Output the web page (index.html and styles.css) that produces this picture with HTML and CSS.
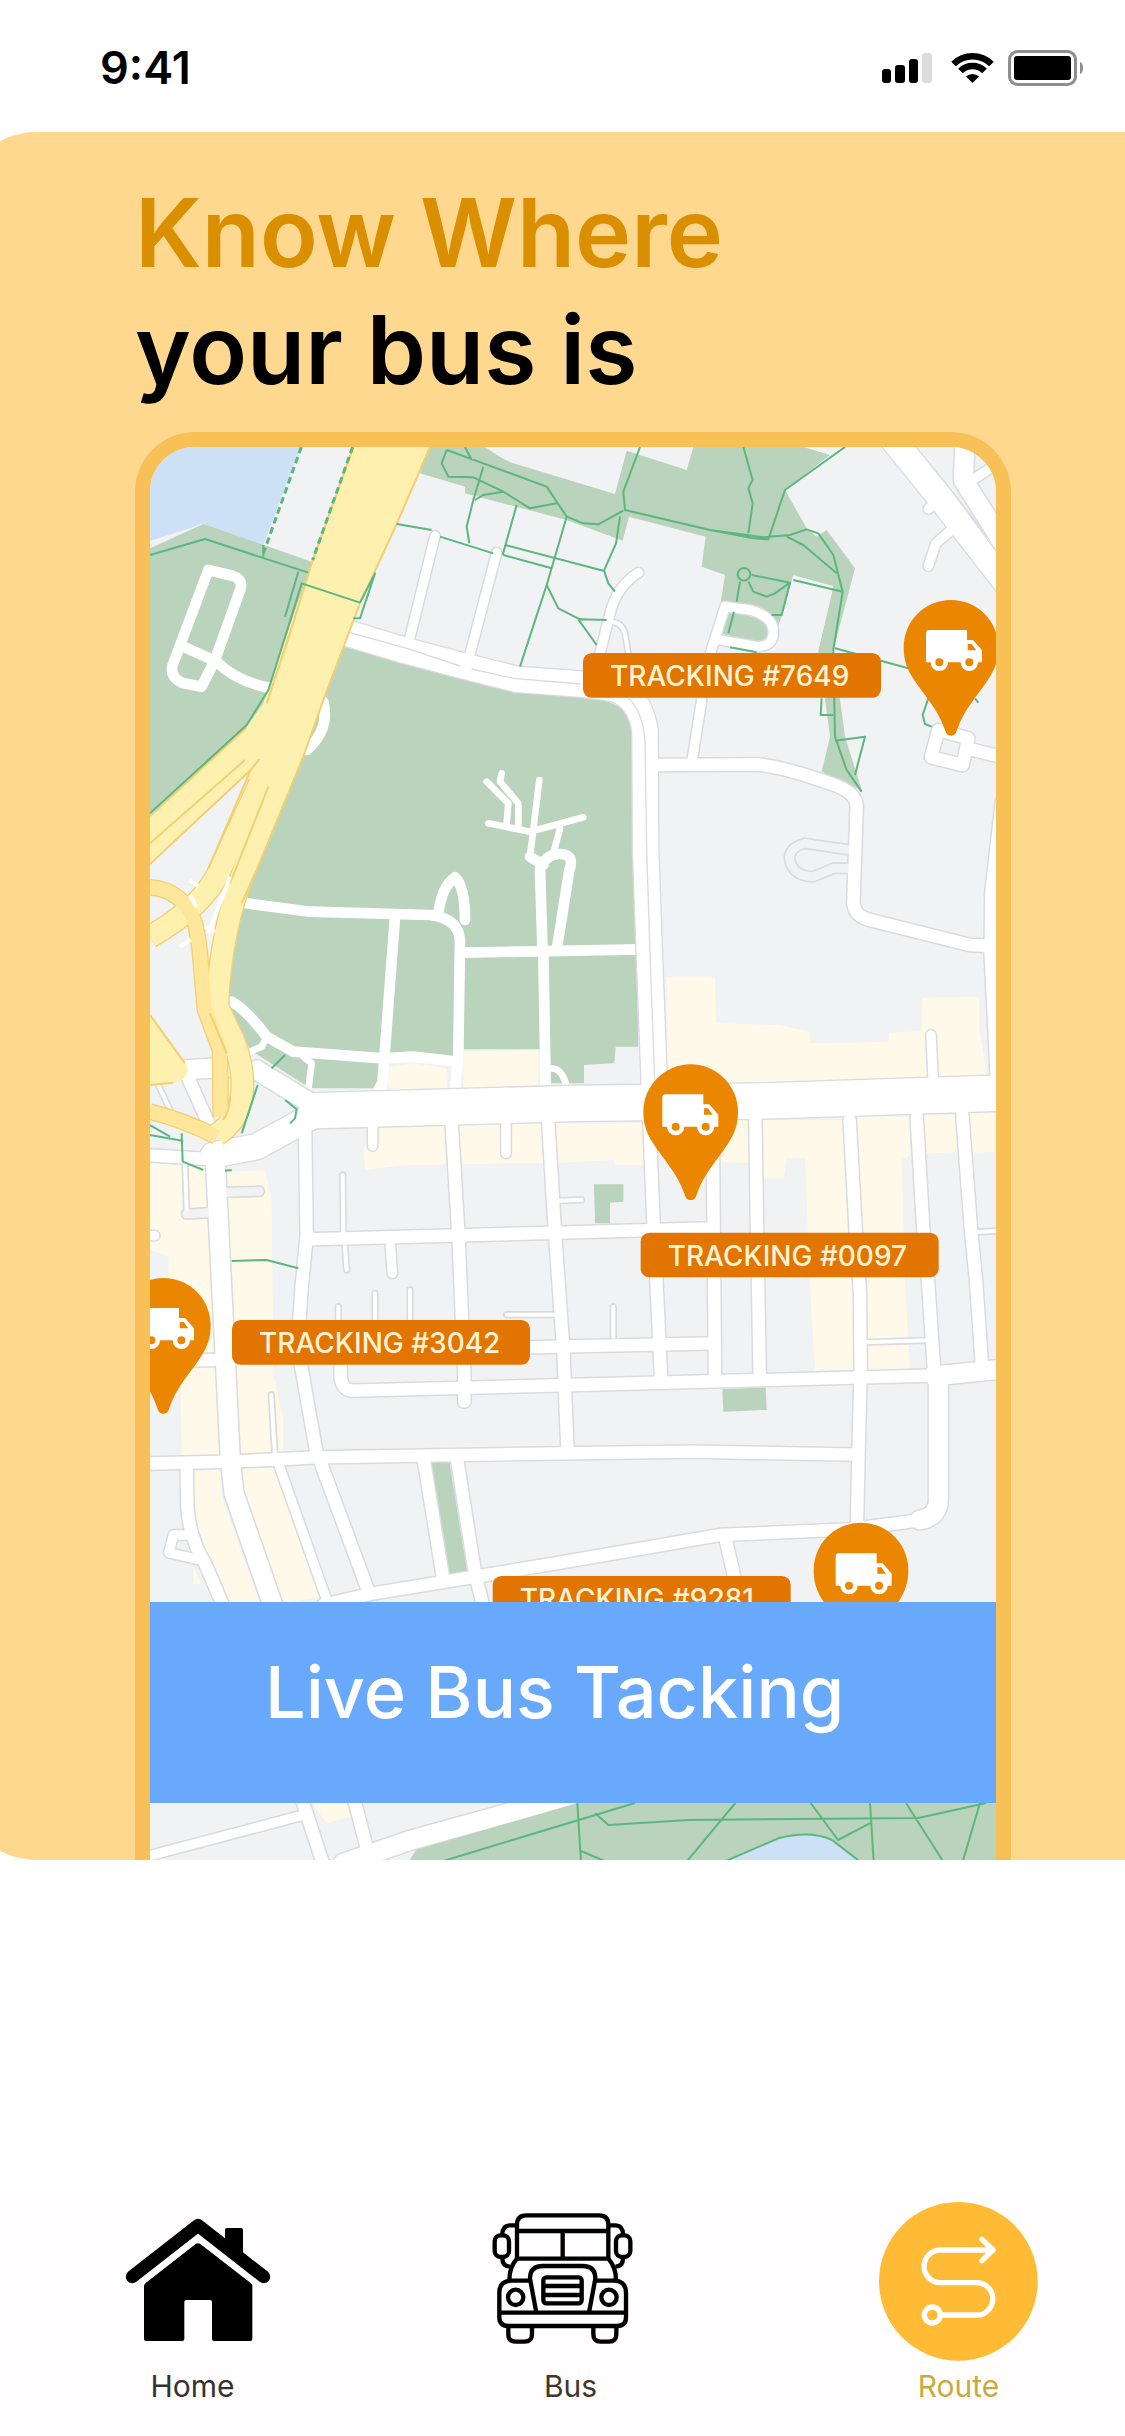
FILE: index.html
```html
<!DOCTYPE html>
<html lang="en">
<head>
<meta charset="utf-8">
<meta name="viewport" content="width=device-width, initial-scale=1">
<title>Live bus route</title>
<link rel="stylesheet" href="styles.css">
</head>
<body>
<header class="status">
  <time class="clock">9:41</time>
  <svg class="status-icons" viewBox="882 48 201 42" aria-hidden="true">
    <rect x="882" y="70" width="9" height="14" rx="3"/>
    <rect x="895" y="66" width="10" height="18" rx="3"/>
    <rect x="909" y="60" width="9" height="24" rx="3"/>
    <rect x="922" y="54" width="10" height="30" rx="3" fill="#dcdcdc"/>
    <path d="M953.5 65A27 27 0 0 1 991.5 65" fill="none" stroke="#000" stroke-width="6.5"/>
    <path d="M960.5 72A17 17 0 0 1 984.5 72" fill="none" stroke="#000" stroke-width="6.5"/>
    <path d="M972.5 84L966 77.500A9.500 9.500 0 0 1 979 77.500Z"/>
    <rect x="1009.500" y="52.500" width="66" height="33" rx="8" fill="none" stroke="#8d8d92" stroke-width="3"/>
    <rect x="1014" y="57" width="57" height="24" rx="3"/>
    <path d="M1080 63Q1083 64 1083 69T1080 75Z" fill="#8d8d92"/>
  </svg>
</header>

<main class="panel">
  <h1 class="title"><span class="title-accent">Know Where</span> <span class="title-rest">your bus is</span></h1>
  <section class="frame" aria-label="Live map">
    <svg class="map" viewBox="60 81 2538 4239" preserveAspectRatio="xMidYMid slice" role="img" aria-label="City map with tracked vehicles">
      <defs>
        <g id="roads-wide"><path d="M560 2072L1350 2050 1900 2043 2650 2018"/></g>
        <g id="roads-large">
          <path d="M640 636L820 690 1010 740 1160 778 1350 792 1450 805Q1530 830 1545 930L1547 1290 1558 1600 1574 2020"/>
          <path d="M580 2070L380 2180 250 2205"/>
          <path d="M2290 60L2440 245 2630 490"/>
        </g>
        <g id="roads-60">
          <path d="M255 2200L265 2400 285 2800 301 3120 312 3220 425 3545 480 3700"/>
          <path d="M2412 2865L2425 2880V3240Q2425 3290 2370 3300"/>
          <path d="M2505 60L2500 180 2620 370M2412 2868L2640 2845"/>
          <path d="M160 1950L310 1940M380 1950L560 2060"/>
          <path d="M1342 4122L837 4262 640 4330"/>
          <path d="M2625 1150L2594 1420 2592 1600 2612 2000"/>
        </g>
        <g id="roads-40">
          <path d="M525 2110L530 2450 515 2600 503 2780 558 3090 710 3500"/>
          <path d="M965 2110L985 2440 1003 2860V2945"/>
          <path d="M1255 2110L1275 2440 1300 2790 1312 3080"/>
          <path d="M1558 2100L1570 2400 1582 2640 1593 2870"/>
          <path d="M1748 2100L1755 2865M1876 2100L1881 2420 1889 2860"/>
          <path d="M2159 2100L2177 2430 2190 2620 2192 2850 2186 3080 2181 3310"/>
          <path d="M2360 2090L2380 2430 2394 2580 2412 2850"/>
          <path d="M2497 2085L2523 2430 2538 2580 2556 2840"/>
          <path d="M530 2458L1290 2438 1740 2425"/>
          <path d="M1200 2782L1310 2779 1750 2770"/>
          <path d="M632 2830V2870Q635 2912 670 2912L1325 2895 2170 2873 2430 2866"/>
          <path d="M40 3131L300 3125 560 3112 1290 3100 1690 3095 2180 3104"/>
          <path d="M580 3555L720 3522 1055 3467 1290 3428 1770 3345 2160 3328 2390 3298"/>
          <path d="M1785 3350L1815 3480M880 3110L940 3480M980 3110L1035 3460 1060 3560"/>
          <path d="M170 3140L172 3260Q180 3360 225 3430L285 3570"/>
          <path d="M1570 1035L1880 1033Q1960 1040 2100 1090 2180 1115 2180 1160L2170 1450Q2175 1490 2220 1500L2520 1575 2600 1578"/>
          <path d="M2425 930L2515 955 2498 1035 2403 1012ZM2510 985L2620 1012"/>
          <path d="M40 2205L250 2218M175 1975L240 2120"/>
          <path d="M510 4120L582 4340M668 4120L725 4340"/>
          <path d="M60 2822L250 2820"/>
        </g>
        <g id="roads-28">
          <path d="M915 348L838 660M1100 398L1018 710"/>
          <path d="M1525 458Q1460 500 1440 580L1405 720M1715 840L1685 1030"/>
          <path d="M1735 720L1785 560 1860 570Q1930 590 1930 635T1880 680L1770 660"/>
          <path d="M2610 125L2500 198M2395 267L2445 220M2475 320L2418 370 2395 438"/>
          <path d="M728 2110V2178M1128 2110V2200M780 2460L787 2560M2403 1845L2410 1990"/>
          <path d="M445 3130L590 3540M180 3345H130L117 3398 200 3418M60 2447H74"/>
          <path d="M520 4185L40 4312"/>
        </g>
        <g id="roads-12">
          <path d="M424 2925L435 3110M638 2265L640 2440M645 2480L650 2550M165 2230L170 2370"/>
          <path d="M1285 2342L1355 2340M2540 2436L2620 2432M1130 2684H1290"/>
          <path d="M1450 2660V2750M2200 2767L2395 2761M735 2620V2700M840 2610V2700M625 2660V2700"/>
          <path d="M1440 605Q1475 605 1485 640L1495 700M85 1995L120 2070"/>
        </g>
        <g id="lanes">
          <path d="M2160 1290L2025 1270Q1970 1285 1980 1325 1995 1370 2050 1370L2110 1345 2160 1345"/>
          <path d="M285 2317L388 2314M240 2378L170 2382"/>
        </g>
        <g id="ramps">
          <path d="M60 1402Q160 1410 195 1510 208 1560 215 1660L225 1770 270 1890 272 2090"/>
          <path d="M60 2075Q160 2100 260 2150"/>
        </g>
        <g id="highways">
          <path d="M390 1090L270 1350Q220 1460 60 1550"/>
          <path d="M455 1040L350 1330Q270 1530 262 1760L310 1860Q345 1950 335 2030 325 2100 260 2145"/>
        </g>
        <g id="truck">
          <path d="M-85 45V-42Q-85-52-75-52H38V-22H56L83 9V45Z"/>
          <circle cx="-45" cy="45" r="26"/><circle cx="45" cy="45" r="26"/>
          <g class="truck-cut"><path d="M40-10H52L66 9H40Z"/><circle cx="-45" cy="45" r="12"/><circle cx="45" cy="45" r="12"/></g>
        </g>
        <path id="pin" d="M0 265C-11 265-15 259-20 243-40 185-80 145-112 96-134 62-142 36-142 0A142 142 0 0 1 142 0C142 36 134 62 112 96 80 145 40 185 20 243 15 259 11 265 0 265Z"/>
      </defs>

      <rect class="land" x="0" y="0" width="2700" height="4400"/>
      <path class="water" d="M60 81H512L400 375 215 312 60 370Z"/>
      <path class="land" d="M60 362L195 320 215 312 205 338 60 385Z"/>

      <g class="blocks">
        <path d="M1000 1895L1225 1888V2010H1000ZM775 1940L850 1930 950 1945V2010H775ZM725 1955L742 1940V2010H725Z"/>
        <path d="M1610 1670H1755L1758 1810 1950 1815 2040 1835 2042 1870 2275 1865 2277 1838 2375 1833V1733L2548 1730V1830L2575 1990H1610Z"/>
        <path d="M750 2110H1540V2235H1455L1450 2220 1290 2228 825 2235 705 2250 700 2180 750 2170Z"/>
        <path d="M1790 2100H1860V2230L1770 2225ZM1898 2100H2140L2160 2400 2175 2850H2055L2040 2600 2025 2215H1970L1962 2275H1900Z"/>
        <path d="M2180 2090H2340V2205L2315 2220 2325 2590 2340 2850H2215ZM2380 2085H2480L2485 2195 2385 2202ZM2515 2080H2600V2195L2520 2198Z"/>
        <path d="M60 2225H225L240 2580 275 3105H155L150 2800 115 2580V2510L60 2490Z"/>
        <path d="M285 2255L405 2250 425 2340 430 2860 460 3000V3095L330 3100 305 2580Z"/>
        <path d="M190 3155L275 3148V3230L390 3550H290L195 3300ZM340 3145H430L575 3530 460 3550 345 3240ZM190 3440L215 3490 190 3495Z"/>
        <path d="M540 4140H650L660 4190 590 4210Z"/>
      </g>

      <g class="parks">
        <path d="M60 385L220 312 545 425 500 620 420 840 350 920 60 1180Z"/>
        <path d="M640 680L1000 770 1350 830Q1480 840 1500 900 1515 930 1515 1290L1525 1880H1457L1453 1930 1362 1935V1990H1240V1888H1000V1910H780L730 2005H540L360 1890 290 1740 340 1430 400 1290 520 1010Z"/>
        <path d="M890 81H1065Q1120 120 1150 130L1455 222 1490 92 1670 150 1690 81H2020L2100 105 1965 210 2030 325 2060 350 2090 330 2175 445 2110 690 2145 950 2195 1110 2075 1055 2100 950 2065 690 2110 500 1990 465 1960 580 1920 680 1770 640V560L1785 465 1715 440 1727 350 1497 290 1478 362 1310 300 1005 220V200L870 160Z"/>
        <path d="M1392 2293H1480V2345L1440 2348V2410H1395ZM1777 2908L1907 2902 1910 2970 1780 2975ZM900 3125L958 3123 1012 3455 957 3465Z"/>
      </g>
      <path class="land" d="M1990 467L2110 498 2065 690H1920L1960 575Z"/>

      <g class="park-roads">
        <path d="M235 450L310 468Q338 478 332 505L255 720 215 800 155 788Q118 770 128 735ZM160 680L260 725Q320 785 425 805"/>
        <path d="M580 845Q600 930 530 990"/>
        <path d="M1200 1310L1240 1335M1238 1600L1230 1350Q1245 1302 1290 1302T1318 1350L1280 1590"/>
        <path d="M350 1450L540 1475 900 1485Q985 1495 990 1560L985 1900 975 2020M925 1480Q935 1400 975 1372 1005 1400 1005 1500"/>
        <path d="M795 1490L755 2020M1000 1598L1530 1588M1240 1600L1247 2000"/>
        <path d="M305 1745Q350 1770 410 1850L490 1895 760 1915 850 1910 980 1925"/>
      </g>
      <g class="park-lanes">
        <path d="M1115 1060L1110 1085 1165 1150V1220M1070 1085L1135 1150 1130 1210M1075 1210L1200 1235 1360 1192M1228 1080L1200 1310M1290 1225L1270 1300"/>
        <path d="M410 1850L395 1880 360 1895M520 1910L545 1930 535 2010M1265 1945Q1300 1945 1312 2010"/>
      </g>

      <g class="case">
        <use href="#lanes" class="w-lane"/><use href="#roads-12" class="w12"/><use href="#roads-28" class="w28"/><use href="#roads-40" class="w40"/><use href="#roads-60" class="w60"/><use href="#roads-large" class="w78"/><use href="#roads-wide" class="w108"/>
      </g>
      <use href="#lanes" class="lane-fill"/>
      <g class="fill">
        <use href="#roads-12" class="w12"/><use href="#roads-28" class="w28"/><use href="#roads-40" class="w40"/><use href="#roads-60" class="w60"/><use href="#roads-large" class="w78"/><use href="#roads-wide" class="w108"/>
      </g>
      <path class="divider" d="M650 635L830 685 990 738M1025 747L1150 775 1350 792M1380 795L1470 815Q1535 850 1545 960L1550 1290 1560 1600 1574 1980M2475 225L2610 410"/>

      <path class="highway-fill" d="M545 430L400 850 350 920 60 1185V1330L362 1050 235 1345 340 1345 520 1010 580 840Z"/>
      <use href="#highways" class="highway-case w66"/><use href="#ramps" class="highway-case w44"/>
      <use href="#highways" class="highway-fill-line w66"/><use href="#ramps" class="highway-fill-line w44"/>
      <path class="highway-fill" d="M60 1785L165 1930Q185 1960 150 1985L60 1995ZM670 70H905L800 312 690 550 580 840 520 1010 382 1345 340 1440 300 1400 380 1090 350 1000 400 850 545 430Z"/>
      <path class="highway-edge" d="M670 81L545 430 480 640 410 850M900 81L800 312 690 550 580 840 520 1010 382 1345 335 1450M350 922L60 1188M345 1020L60 1270M388 1018L362 1050 60 1332M362 1050L235 1345M415 1100L300 1390M60 1785L165 1930M60 1995L130 1988M240 1780L290 1900M300 2030Q300 2070 280 2100"/>
      <path class="ramp-mark" d="M300 1370L235 1540M178 1380L205 1400M180 1425L200 1460M150 1580L182 1558M225 1520L255 1535"/>

      <path class="park" d="M1342 4149L858 4290 836 4325H2600V4149Z"/>
      <path class="water" d="M1783 4325L1945 4255Q2040 4230 2106 4260L2190 4325Z"/>

      <g class="trails">
        <path d="M60 405L225 357 535 458M400 375V410M505 455L465 590M690 548L515 490 475 620 415 810 350 915 60 1180M690 548L735 460 690 595H670"/>
        <path d="M800 312L905 330M930 350L1090 400M1120 405L1265 445M1125 375L1420 452"/>
        <path d="M950 90L1060 130 1250 200 1310 290 1360 310 1405 313 1480 272M950 90L935 130 955 170 1030 172 1120 215 1200 265 1280 250M1005 81L1025 120M1060 140L1030 240 1010 320 1018 370M1035 240L1060 225 1120 215M1160 255L1118 405M1310 290L1250 495 1170 740M1250 495L1285 565 1350 598 1430 600M1345 598L1400 675"/>
        <path d="M1530 81L1480 215 1485 270 1740 330 1870 355 1915 358 1965 210 2145 81M1840 81L1868 180 1855 205 1868 250 1855 340M1740 330L1900 352 1980 345 2030 328 2065 340 2110 405 2138 515 2110 690 2115 950 2150 1050 2195 1115M1970 350L2020 375 2120 460M1470 290L1458 370 1422 452 1435 490 1455 515"/>
        <circle cx="1842" cy="463" r="19"/>
        <path d="M1865 465L1980 488M1990 480L2138 515M1830 485L1820 545M1812 575L1795 640M1855 485L1870 515 1910 530 1935 520 1980 488 1955 585H1925M2115 685L2335 745M2075 835L2072 885H2110M2115 962L2205 950 2175 1065M2395 835L2378 885 2385 912 2405 920M2535 835L2545 848M1800 682L1880 697"/>
        <path d="M465 1905L425 1945M383 1995L335 2140M465 2040L500 2068 495 2095 480 2110M60 2115L120 2150M155 2140L158 2225 220 2250M60 2145L160 2163M285 2252L305 2250M305 2523L410 2520 505 2545"/>
        <path d="M1342 4149L1353 4325M1515 4149L933 4325M1396 4180L1435 4215 1676 4200 2365 4194 2569 4149M1816 4149L1670 4325M2042 4149L2124 4260 2225 4207M2220 4149L2231 4325M2328 4149L2440 4325M2550 4149L2498 4325M1353 4293L1428 4325M1783 4325L1945 4255Q2040 4230 2106 4260L2190 4325"/>
      </g>
      <path class="trail-dashed" d="M514 81L400 400M668 81L548 420"/>

      <g class="pins"><use href="#pin" x="2463" y="682"/><use href="#pin" x="1682" y="2075"/><use href="#pin" x="100" y="2716"/><use href="#pin" x="2193" y="3450"/></g>
      <g class="trucks"><use href="#truck" x="2473" y="682"/><use href="#truck" x="1682" y="2075"/><use href="#truck" x="109" y="2716"/><use href="#truck" x="2202" y="3452"/></g>
      <g class="tags">
        <rect x="1359" y="699" width="894" height="134" rx="26"/><text x="1440" y="798">TRACKING #7649</text>
        <rect x="1532" y="2438" width="894" height="134" rx="26"/><text x="1613" y="2537">TRACKING #0097</text>
        <rect x="306" y="2700" width="894" height="134" rx="26"/><text x="387" y="2799">TRACKING #3042</text>
        <rect x="1088" y="3468" width="894" height="134" rx="26"/><text x="1169" y="3567">TRACKING #9281</text>
      </g>
    </svg>
    <p class="banner">Live Bus Tacking</p>
  </section>
</main>

<nav class="tabs" aria-label="Main">
  <a class="tab" href="#home">
    <svg viewBox="69 66 477 477" aria-hidden="true">
      <path d="M127 290L324 136 521 290" fill="none" stroke="#000" stroke-width="39" stroke-linecap="round" stroke-linejoin="round"/>
      <path d="M405 210V150Q405 144 411 144H453Q459 144 459 150V240Z"/>
      <path d="M162 318Q162 312 168 308L317 192Q324 187 331 192L481 308Q487 312 487 318V477Q487 483 481 483H372Q366 483 366 477V366Q366 360 360 360H289Q283 360 283 366V477Q283 483 277 483H168Q162 483 162 477Z"/>
    </svg>
    <span>Home</span>
  </a>
  <a class="tab tab-bus" href="#bus">
    <svg viewBox="93 66 477 477" aria-hidden="true">
      <g fill="none" stroke="#000" stroke-width="13" stroke-linejoin="round">
        <path d="M171 236V134Q171 106 199 106H417Q445 106 445 134V236ZM171 153H445M308 153V236"/>
        <path d="M171 136H148Q127 138 127 163M445 136H468Q489 138 489 163M127 235Q127 260 150 260M489 235Q489 260 466 260"/>
        <rect x="104" y="166" width="43" height="65" rx="18"/>
        <rect x="468" y="166" width="43" height="65" rx="18"/>
        <path d="M171 236Q148 262 148 300M445 236Q468 262 468 300"/>
        <path d="M211 302H152Q118 304 118 338V412Q118 438 144 438H472Q498 438 498 412V338Q498 304 464 302H405M118 398H498"/>
        <path d="M229 398L210 296Q210 258 248 258H368Q406 258 406 296L387 398"/>
        <rect x="250" y="292" width="115" height="78" rx="9"/>
        <path d="M250 318H365M250 345H365"/>
        <circle cx="167" cy="352" r="23"/><circle cx="447" cy="352" r="23"/>
        <path d="M145 440V463Q145 485 167 485H194Q216 485 216 463V440M400 440V463Q400 485 422 485H447Q469 485 469 463V440"/>
      </g>
    </svg>
    <span>Bus</span>
  </a>
  <a class="tab tab-route" href="#route" aria-current="page">
    <svg viewBox="87 66 477 477" aria-hidden="true">
      <circle cx="325" cy="304" r="238" fill="#ffbb35"/>
      <g fill="none" stroke="#fff" stroke-width="16" stroke-linecap="round" stroke-linejoin="round">
        <path d="M425 210H271A49 49 0 0 0 271 308H380A48 48 0 0 1 380 405H272M396 178L429 210 396 242"/>
        <circle cx="247" cy="405" r="24"/>
      </g>
    </svg>
    <span>Route</span>
  </a>
</nav>
</body>
</html>
```
FILE: styles.css
```css
* { box-sizing: border-box; }

body {
  margin: 0;
  min-height: 100vh;
  display: flex;
  flex-direction: column;
  background: #fff;
  color: #000;
  font-family: Inter, "Liberation Sans", sans-serif;
}

.status {
  display: flex;
  justify-content: space-between;
  align-items: center;
  height: 132px;
  padding: 4px 42px 0 100px;
}
.clock { font-size: 45px; font-weight: 600; line-height: 54px; }
.status-icons { width: 201px; height: 42px; }

.panel {
  margin-left: -39px;
  padding: 42px 114px 0 174px;
  border-radius: 75px 0 0 75px;
  background: #ffd88f;
}
.title {
  margin: 0 0 24px;
  font-size: 95px;
  font-weight: 600;
  line-height: 117px;
}
.title span { display: block; }
.title-accent { color: #d98f00; }

.frame {
  display: grid;
  grid-template-rows: 1155px auto 57px;
  border: 15px solid #f8c158;
  border-bottom: 0;
  border-radius: 60px 60px 0 0;
  overflow: hidden;
}
.map {
  grid-area: 1 / 1 / 4 / 2;
  width: 100%;
  height: 100%;
  min-height: 0;
}
.banner {
  grid-area: 2 / 1 / 3 / 2;
  z-index: 1;
  margin: 0;
  padding: 46px 112px 67px 115px;
  background: #68a9fb;
  color: #fff;
  font-size: 72px;
  font-weight: 500;
  line-height: 88px;
}

.land { fill: #f0f2f4; }
.water { fill: #cce1f6; }
.blocks { fill: #fef9e8; }
.parks, .park { fill: #bad3bc; }
.park-roads, .park-lanes { fill: none; stroke: #fff; stroke-linecap: round; stroke-linejoin: round; }
.park-roads { stroke-width: 32px; }
.park-lanes { stroke-width: 20px; }

.case, .fill, .lane-fill { fill: none; stroke-linejoin: round; stroke-linecap: round; }
.fill { stroke: #fff; }
.lane-fill { stroke: #f0f2f4; stroke-width: 26px; }
.w12 { stroke-width: 12px; }
.w28 { stroke-width: 28px; }
.w40 { stroke-width: 37px; }
.w44 { stroke-width: 42px; }
.w60 { stroke-width: 57px; }
.w66 { stroke-width: 64px; }
.w78 { stroke-width: 76px; }
.w108 { stroke-width: 106px; }
.case { stroke: #dadbde; }
.case .w-lane { stroke-width: 36px; }
.case .w12 { stroke-width: 22px; }
.case .w28 { stroke-width: 37px; }
.case .w40 { stroke-width: 46px; }
.case .w60 { stroke-width: 66px; }
.case .w78 { stroke-width: 84px; }
.case .w108 { stroke-width: 114px; }
.divider { fill: none; stroke: #dadbde; stroke-width: 4px; }

.highway-fill { fill: #fef0ae; }
.highway-case, .highway-fill-line, .highway-edge, .ramp-mark { fill: none; stroke-linejoin: round; }
.highway-case { stroke: #f3cf74; }
.highway-case.w66 { stroke-width: 72px; }
.highway-case.w44 { stroke-width: 50px; }
.highway-fill-line { stroke: #fee79b; }
.highway-fill-line.w66 { stroke: #fef0ae; }
.highway-edge { stroke: #f3cf74; stroke-width: 6px; }
.ramp-mark { stroke: #fff; stroke-width: 12px; }

.trails, .trail-dashed { fill: none; stroke: #5cb67f; stroke-width: 6px; stroke-linejoin: round; }
.trail-dashed { stroke-width: 9px; stroke-dasharray: 20 12; }

.pins, .truck-cut { fill: #ea8600; }
.trucks { fill: #fff; }
.tags rect { fill: #e27500; }
.tags text { fill: #fff3d6; font-size: 84px; font-weight: 500; }

.tabs {
  display: grid;
  grid-template-columns: 378fr 388fr 159px;
  margin-top: auto;
  padding: 9px 87px 33px 113px;
  background: #fffdfe;
}
.tab {
  display: flex;
  flex-direction: column;
  align-items: center;
  gap: 8px;
  width: 159px;
  color: #333;
  font-size: 30px;
  line-height: 34px;
  text-decoration: none;
}
.tab svg { width: 159px; height: 159px; }
.tab-bus { color: #3d3928; }
.tab-route { color: #c9ab3c; }
```
